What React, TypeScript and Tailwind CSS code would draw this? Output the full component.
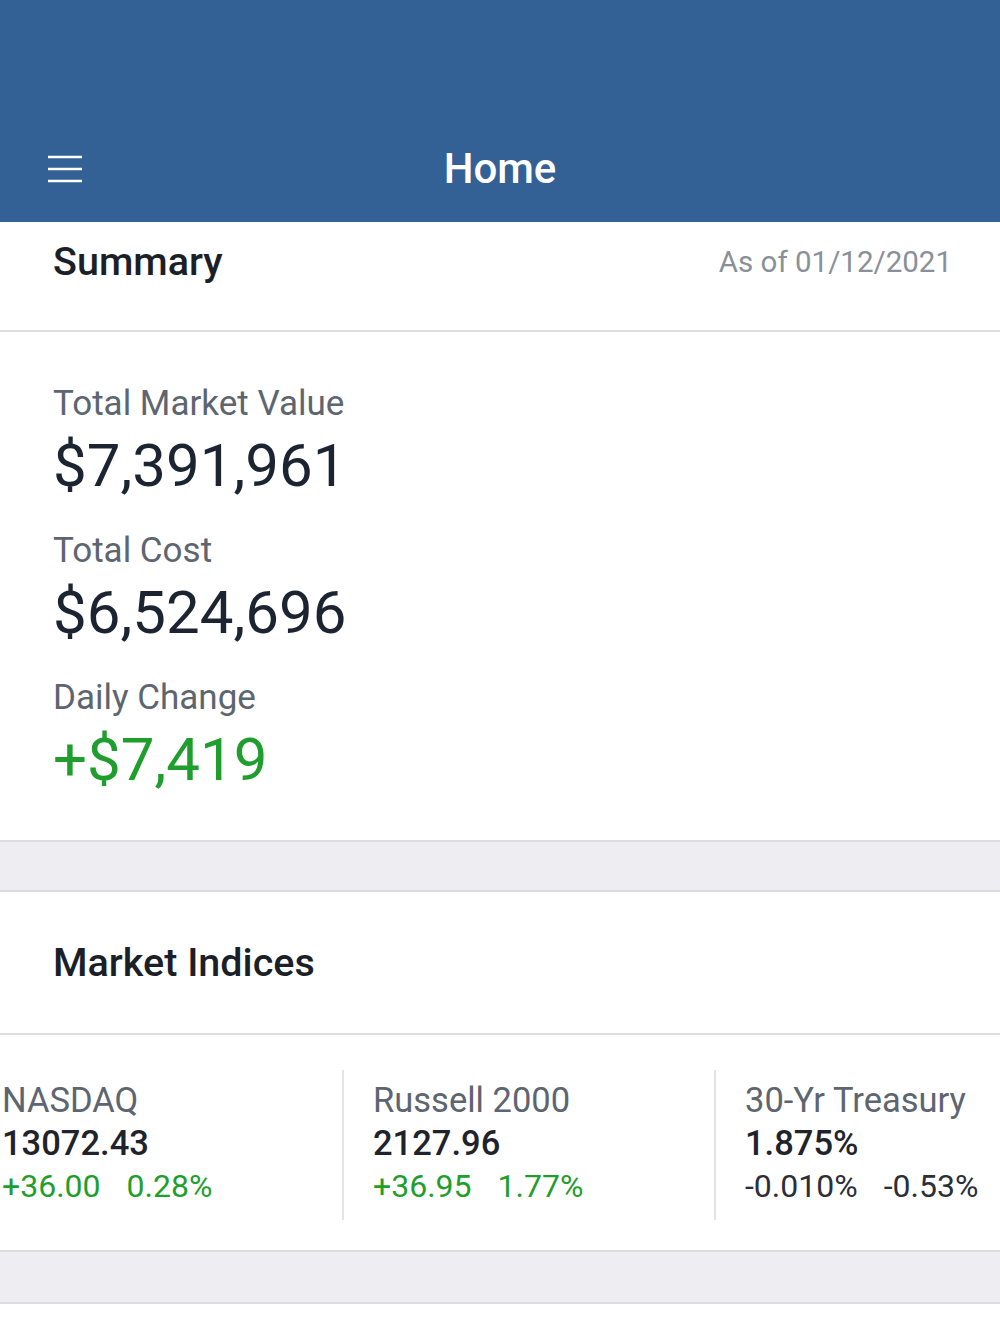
import React from 'react';

const font = { fontFamily: 'Roboto, "Noto Sans", sans-serif' };

const indices = [
  { name: 'NASDAQ', value: '13072.43', change: '+36.00', pct: '0.28%', up: true },
  { name: 'Russell 2000', value: '2127.96', change: '+36.95', pct: '1.77%', up: true },
  { name: '30-Yr Treasury', value: '1.875%', change: '-0.010%', pct: '-0.53%', up: false },
];

const summary = [
  { label: 'Total Market Value', value: '$7,391,961', green: false },
  { label: 'Total Cost', value: '$6,524,696', green: false },
  { label: 'Daily Change', value: '+$7,419', green: true },
];

// Hamburger icon from the top bar
const MenuIcon = () => (
  <svg width="36" height="28" viewBox="0 0 36 28" fill="none">
    <line x1="1" y1="2" x2="35" y2="2" stroke="white" strokeWidth="2.6" />
    <line x1="1" y1="14" x2="35" y2="14" stroke="white" strokeWidth="2.6" />
    <line x1="1" y1="26" x2="35" y2="26" stroke="white" strokeWidth="2.6" />
  </svg>
);

const App = () => {
  return (
    <div className="min-h-[1334px] w-[1000px] bg-white overflow-hidden" style={font}>
      {/* Top bar */}
      <div className="h-[222px] bg-[#336195] flex flex-col justify-end">
        <div className="h-[106px] grid grid-cols-[1fr_auto_1fr] items-center px-[47px]">
          <div className="flex items-center">
            <MenuIcon />
          </div>
          <h1 className="text-[42px] font-medium text-white leading-none">Home</h1>
          <div />
        </div>
      </div>

      {/* Summary header */}
      <div className="h-[110px] border-b-2 border-[#dedee2] flex items-start justify-between pl-[53px] pr-[48px] pt-[16px]">
        <span className="text-[39.5px] font-medium text-[#1b1f27] leading-[48px]">Summary</span>
        <span className="text-[29.5px] text-[#8a9099] leading-[48px]">As of 01/12/2021</span>
      </div>

      {/* Summary values */}
      <div className="pt-[50px] pb-[48px] pl-[53px] flex flex-col gap-[31px]">
        {summary.map((s) => (
          <div key={s.label} className="flex flex-col">
            <span className="text-[35px] text-[#5d6570] leading-[44px]">{s.label}</span>
            <span
              className={`mt-2 text-[60px] leading-[64px] ${s.green ? 'text-[#1f9e2e]' : 'text-[#1c2331]'}`}
            >
              {s.value}
            </span>
          </div>
        ))}
      </div>

      {/* Gap */}
      <div className="h-[52px] bg-[#eeeef2] border-t-2 border-b-2 border-[#dcdce0]" />

      {/* Market Indices */}
      <div className="h-[143px] border-b-2 border-[#dedee2] flex items-center pl-[53px]">
        <h2 className="text-[39.5px] font-medium text-[#1b1f27] leading-none">Market Indices</h2>
      </div>

      <div className="pt-[35px] pb-[30px] overflow-hidden">
        <div className="flex -ml-[30px]">
          {indices.map((idx, i) => (
            <div
              key={idx.name}
              className={`w-[372px] shrink-0 pt-[9px] pb-[12px] flex flex-col ${
                i === 0 ? 'pl-[32px]' : 'pl-[29px] border-l-2 border-[#e4e4e8]'
              }`}
            >
              <span className="text-[34.5px] text-[#5d6570] leading-[43px] whitespace-nowrap">{idx.name}</span>
              <span className="text-[34.5px] font-medium text-[#1f232b] leading-[43px]">{idx.value}</span>
              <div
                className={`flex gap-[26px] text-[32px] leading-[43px] whitespace-nowrap ${
                  idx.up ? 'text-[#1f9e2e]' : 'text-[#2a2f38]'
                }`}
              >
                <span>{idx.change}</span>
                <span>{idx.pct}</span>
              </div>
            </div>
          ))}
        </div>
      </div>

      {/* Gap */}
      <div className="h-[54px] bg-[#eeeef2] border-t-2 border-b-2 border-[#dcdce0]" />
    </div>
  );
};

export default App;
